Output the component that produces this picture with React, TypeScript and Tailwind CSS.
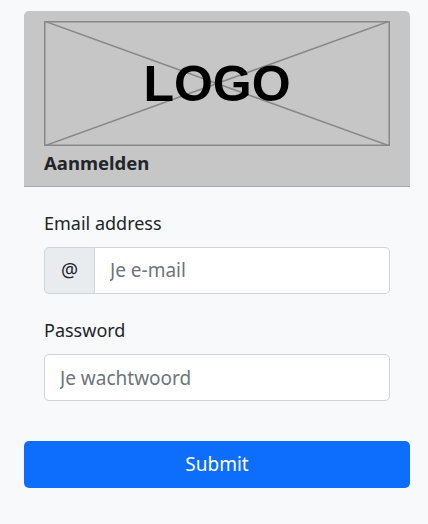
import React from "react";

const font = { fontFamily: '"Noto Sans", "Open Sans", sans-serif' };

function Logo() {
    return (
        <div className="relative h-[125px] w-[346px]">
            <svg className="absolute inset-0" width="346" height="125" viewBox="0 0 346 125">
                <rect x="0.75" y="0.75" width="344.5" height="123.5" fill="none" stroke="#888" strokeWidth="1.5" />
                <line x1="0" y1="0" x2="346" y2="125" stroke="#888" strokeWidth="1.5" />
                <line x1="346" y1="0" x2="0" y2="125" stroke="#888" strokeWidth="1.5" />
            </svg>
            <div className="absolute inset-0 flex items-center justify-center">
                <span className="font-['Liberation_Sans',Arial,sans-serif] text-[50px] font-bold leading-none text-black">
                    LOGO
                </span>
            </div>
        </div>
    );
}

export default function App() {
    return (
        <div className="min-h-[524px] bg-[#f8f9fa] px-6 pt-[11px]" style={font}>
            <div className="w-[386px]">
                <div className="rounded-t-[5px] border-b border-[#a8a8a8] bg-[#c6c6c6] px-5 pt-[10px] pb-[10px]">
                    <Logo />
                    <h5 className="mt-[4px] text-[18.5px] font-bold leading-[26px] text-[#212529]">Aanmelden</h5>
                </div>

                <div className="px-5 pt-[24px] pb-[40px] text-[#212529]">
                    <label className="block text-[18px] leading-[24px]">Email address</label>
                    <div className="mt-[12px] flex h-[47px]">
                        <span className="flex w-[51px] shrink-0 items-center justify-center rounded-l-[5px] border border-[#ced4da] bg-[#e9ecef] text-[19px]">
                            @
                        </span>
                        <input
                            className="min-w-0 flex-1 rounded-r-[5px] border border-l-0 border-[#ced4da] bg-white px-[15px] text-[19px] outline-none placeholder:text-[#6c757d]"
                            placeholder="Je e-mail"
                        />
                    </div>

                    <label className="mt-[24px] block text-[18px] leading-[24px]">Password</label>
                    <input
                        type="password"
                        className="mt-[12px] block h-[47px] w-full rounded-[5px] border border-[#ced4da] bg-white px-[15px] text-[19px] outline-none placeholder:text-[#6c757d]"
                        placeholder="Je wachtwoord"
                    />
                </div>

                <button className="flex h-[47px] w-full items-center justify-center rounded-[5px] bg-[#0d6efd] text-[19px] text-white">
                    Submit
                </button>
            </div>
        </div>
    );
}
